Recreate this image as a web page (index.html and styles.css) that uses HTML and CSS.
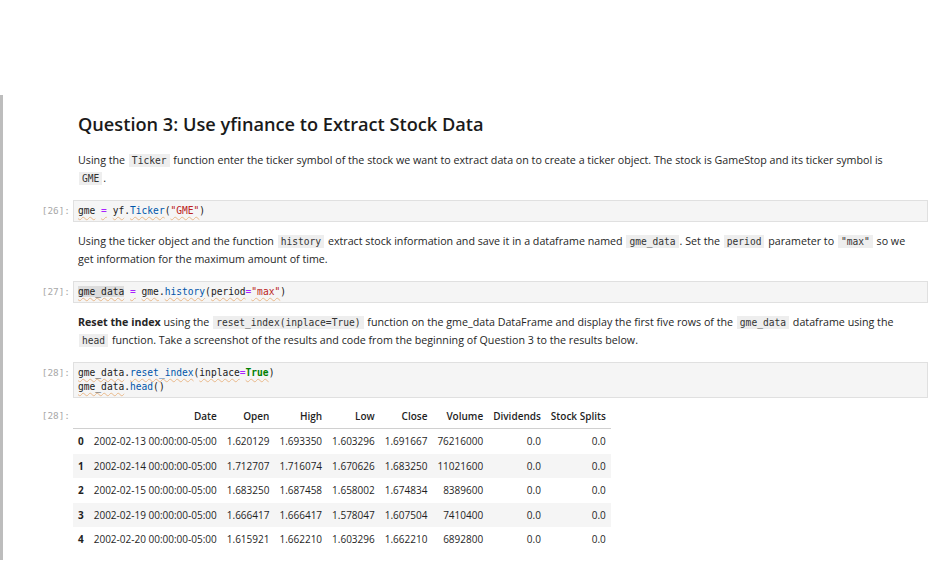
FILE: index.html
```html
<!DOCTYPE html>
<html>
<head>
<meta charset="utf-8">
<link rel="stylesheet" href="styles.css">
</head>
<body>
<div class="notebook">
  <div class="cell md">
    <div class="prompt"></div>
    <div class="content">
      <h2 class="title">Question 3: Use yfinance to Extract Stock Data</h2>
      <p class="para">Using the <code class="ic">Ticker</code> function enter the ticker symbol of the stock we want to extract data on to create a ticker object. The stock is GameStop and its ticker symbol is <code class="ic">GME</code>.</p>
    </div>
  </div>

  <div class="cell code">
    <div class="prompt">[26]:</div>
    <div class="codebox"><pre><span class="sq">gme</span> <span class="op sq">=</span> <span class="sq">yf</span>.<span class="fn sq">Ticker</span>(<span class="str sq">"GME"</span>)</pre></div>
  </div>

  <div class="cell md">
    <div class="prompt"></div>
    <div class="content">
      <p class="para">Using the ticker object and the function <code class="ic">history</code> extract stock information and save it in a dataframe named <code class="ic">gme_data</code>. Set the <code class="ic">period</code> parameter to <code class="ic">"max"</code> so we get information for the maximum amount of time.</p>
    </div>
  </div>

  <div class="cell code">
    <div class="prompt">[27]:</div>
    <div class="codebox"><pre><span class="sel sq">gme_data</span> <span class="op sq">=</span> <span class="sq">gme</span>.<span class="fn sq">history</span>(<span class="sq">period</span><span class="op">=</span><span class="str sq">"max"</span>)</pre></div>
  </div>

  <div class="cell md">
    <div class="prompt"></div>
    <div class="content">
      <p class="para"><b>Reset the index</b> using the <code class="ic">reset_index(inplace=True)</code> function on the gme_data DataFrame and display the first five rows of the <code class="ic">gme_data</code> dataframe using the <code class="ic">head</code> function. Take a screenshot of the results and code from the beginning of Question 3 to the results below.</p>
    </div>
  </div>

  <div class="cell code">
    <div class="prompt">[28]:</div>
    <div class="codebox"><pre><span class="sq">gme_data</span>.<span class="fn sq">reset_index</span>(<span class="sq">inplace</span><span class="op">=</span><span class="kw sq">True</span>)
<span class="sq">gme_data</span>.<span class="fn">head</span>()</pre></div>
  </div>

  <div class="cell out">
    <div class="prompt">[28]:</div>
    <div class="output">
      <table class="df">
        <thead>
          <tr><th></th><th>Date</th><th>Open</th><th>High</th><th>Low</th><th>Close</th><th>Volume</th><th>Dividends</th><th>Stock Splits</th></tr>
        </thead>
        <tbody>
          <tr><th>0</th><td>2002-02-13 00:00:00-05:00</td><td>1.620129</td><td>1.693350</td><td>1.603296</td><td>1.691667</td><td>76216000</td><td>0.0</td><td>0.0</td></tr>
          <tr><th>1</th><td>2002-02-14 00:00:00-05:00</td><td>1.712707</td><td>1.716074</td><td>1.670626</td><td>1.683250</td><td>11021600</td><td>0.0</td><td>0.0</td></tr>
          <tr><th>2</th><td>2002-02-15 00:00:00-05:00</td><td>1.683250</td><td>1.687458</td><td>1.658002</td><td>1.674834</td><td>8389600</td><td>0.0</td><td>0.0</td></tr>
          <tr><th>3</th><td>2002-02-19 00:00:00-05:00</td><td>1.666417</td><td>1.666417</td><td>1.578047</td><td>1.607504</td><td>7410400</td><td>0.0</td><td>0.0</td></tr>
          <tr><th>4</th><td>2002-02-20 00:00:00-05:00</td><td>1.615921</td><td>1.662210</td><td>1.603296</td><td>1.662210</td><td>6892800</td><td>0.0</td><td>0.0</td></tr>
        </tbody>
      </table>
    </div>
  </div>
</div>
</body>
</html>
```

FILE: styles.css
```css
html, body {
  margin: 0;
  padding: 0;
  background: #ffffff;
}
body {
  font-family: "Open Sans", "Noto Sans", sans-serif;
  color: #212121;
}
.notebook {
  margin-top: 95px;
  border-left: 3px solid #bdbdbd;
  width: 930px;
  padding-bottom: 8px;
}
.cell {
  display: flex;
  align-items: flex-start;
}
.prompt {
  width: 70px;
  flex: none;
  box-sizing: border-box;
  padding-right: 3px;
  text-align: right;
  font-family: "DejaVu Sans Mono", monospace;
  font-size: 9.4px;
  line-height: 14px;
  color: #a8a8a8;
}
.content {
  flex: 1;
  padding: 0 23px 0 5px;
}
.title {
  margin: 16px 0 14px 0;
  font-size: 18.2px;
  font-weight: 600;
  line-height: 26px;
  color: #1a1a1a;
}
.para {
  margin: 10px 0 13px 0;
  font-size: 10.7px;
  line-height: 18px;
  color: #262626;
}
.ic {
  font-family: "DejaVu Sans Mono", monospace;
  font-size: 9.6px;
  line-height: 1;
  background: #eeeeee;
  margin: 0 1px;
  padding: 1px 3px;
  color: #333;
}
.para b {
  font-weight: 700;
}
.cell.code .prompt {
  padding-top: 4px;
}
.codebox {
  flex: none;
  width: 855px;
  box-sizing: border-box;
  background: #f5f5f5;
  border: 1px solid #e0e0e0;
  padding: 3px 4px;
}
.codebox pre {
  margin: 0;
  font-family: "DejaVu Sans Mono", monospace;
  font-size: 9.6px;
  line-height: 14px;
  color: #212121;
}
.op { color: #aa22ff; }
.fn { color: #0055aa; }
.str { color: #ba2121; }
.kw { color: #008000; font-weight: bold; }
.sel { background: #dcdcdc; }
.sq {
  text-decoration: underline wavy #eab98a;
  text-decoration-thickness: 1px;
  text-underline-offset: 2px;
}
.cell.out {
  margin-top: 6px;
}
.cell.out .prompt {
  padding-top: 5px;
}
.df {
  border-collapse: collapse;
  font-family: "Open Sans", "Noto Sans", sans-serif;
  font-size: 10px;
  color: #1f1f1f;
}
.df th, .df td {
  text-align: right;
  padding: 0 5px;
  height: 24.5px;
  white-space: nowrap;
}
.df thead th {
  font-weight: 600;
  border-bottom: 1px solid #d0d0d0;
  height: 24px;
}
.df tbody th {
  font-weight: 700;
}
.df tbody tr:nth-child(even) {
  background: #f5f5f5;
}
```
